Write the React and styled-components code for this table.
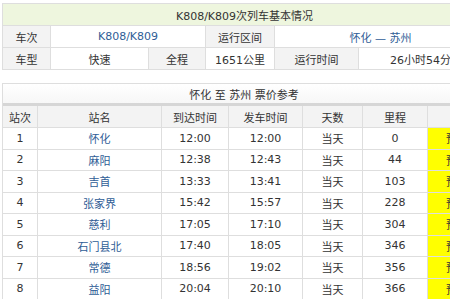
import React from "react";
import styled, { createGlobalStyle } from "styled-components";

const Global = createGlobalStyle`
  html, body { margin: 0; padding: 0; background: #fff; overflow: hidden; }
  body { font-family: "DejaVu Sans", "Noto Sans CJK SC", sans-serif; font-size: 11px; color: #333; }
`;

const Page = styled.div`
  width: 484px;
  padding: 3px 0 0 2px;
`;

const InfoTable = styled.div`
  display: grid;
  grid-template-columns: 47px 97px 56px 68px 83px 127px;
  grid-auto-rows: 21px;
  gap: 1px;
  background: #dedede;
  border: 1px solid #dedede;
`;

const InfoTitle = styled.div`
  grid-column: 1 / -1;
  background: #eef6de;
  display: flex;
  align-items: center;
  justify-content: center;
  color: #333;
`;

const Cell = styled.div`
  grid-column: span ${(p) => p.$span || 1};
  background: ${(p) => (p.$label ? "#f3f3f3" : p.$hl ? "#ffff00" : "#fff")};
  color: ${(p) => (p.$blue ? "#2f5d96" : "#333")};
  display: flex;
  align-items: center;
  justify-content: ${(p) => (p.$indent ? "flex-start" : "center")};
  padding-left: ${(p) => (p.$indent ? `${p.$indent}px` : "0")};
  white-space: nowrap;
  overflow: hidden;
`;

const FareBlock = styled.div`
  margin-top: 13px;
  border: 1px solid #dedede;
  border-bottom: none;
`;

const FareTitle = styled.div`
  height: 19px;
  display: flex;
  align-items: center;
  justify-content: center;
  background: linear-gradient(#ffffff, #f7f7f7);
  border-bottom: 3px solid #d6d6d6;
`;

const FareGrid = styled.div`
  display: grid;
  grid-template-columns: 34px 123px 66px 73px 59px 64px 58px;
  grid-template-rows: 21px;
  grid-auto-rows: 20.5px;
  gap: 1px;
  background: #dedede;
`;

const HeadCell = styled(Cell)`
  background: #f3f3f3;
`;

const stations = [
  ["1", "怀化", "12:00", "12:00", "当天", "0"],
  ["2", "麻阳", "12:38", "12:43", "当天", "44"],
  ["3", "吉首", "13:33", "13:41", "当天", "103"],
  ["4", "张家界", "15:42", "15:57", "当天", "228"],
  ["5", "慈利", "17:05", "17:10", "当天", "304"],
  ["6", "石门县北", "17:40", "18:05", "当天", "346"],
  ["7", "常德", "18:56", "19:02", "当天", "356"],
  ["8", "益阳", "20:04", "20:10", "当天", "366"],
];

const heads = ["站次", "站名", "到达时间", "发车时间", "天数", "里程", ""];

export default function App() {
  return (
    <Page>
      <Global />
      <InfoTable>
        <InfoTitle>K808/K809次列车基本情况</InfoTitle>
        <Cell $label>车次</Cell>
        <Cell $span={2} $blue>K808/K809</Cell>
        <Cell $label>运行区间</Cell>
        <Cell $span={2} $blue>怀化 — 苏州</Cell>
        <Cell $label>车型</Cell>
        <Cell>快速</Cell>
        <Cell $label>全程</Cell>
        <Cell>1651公里</Cell>
        <Cell $label>运行时间</Cell>
        <Cell $indent={31}>26小时54分钟</Cell>
      </InfoTable>
      <FareBlock>
        <FareTitle>怀化 至 苏州 票价参考</FareTitle>
        <FareGrid>
          {heads.map((h, i) => (
            <HeadCell key={i}>{h}</HeadCell>
          ))}
          {stations.map((r) => (
            <React.Fragment key={r[0]}>
              <Cell>{r[0]}</Cell>
              <Cell $blue>{r[1]}</Cell>
              <Cell>{r[2]}</Cell>
              <Cell>{r[3]}</Cell>
              <Cell>{r[4]}</Cell>
              <Cell>{r[5]}</Cell>
              <Cell $hl>预订</Cell>
            </React.Fragment>
          ))}
        </FareGrid>
      </FareBlock>
    </Page>
  );
}
